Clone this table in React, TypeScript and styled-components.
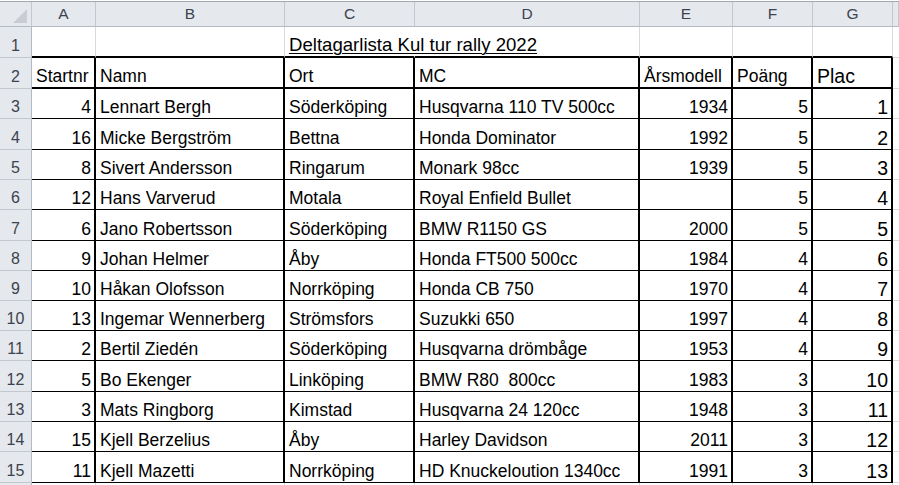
import React from 'react';
import styled, { createGlobalStyle, css } from 'styled-components';

const GlobalStyle = createGlobalStyle`
  html, body {
    margin: 0;
    padding: 0;
    background: #ffffff;
    overflow: hidden;
  }
`;

const COLS = '32px 64px 189px 130px 225px 93px 80px 80px 1fr';
const HEAD_BG = '#e5e8ec';
const HEAD_LINE = '#c3c8cf';
const GRID = '#d6d9de';

const Sheet = styled.div`
  width: 899px;
  height: 485px;
  overflow: hidden;
  padding-top: 1px;
  box-sizing: border-box;
  font-family: 'Liberation Sans', Arial, sans-serif;
  font-size: 17.5px;
  color: #000;
`;

const Row = styled.div<{ $h: number }>`
  display: grid;
  grid-template-columns: ${COLS};
  height: ${(p) => p.$h}px;
`;

const ColHeadRow = styled(Row)`
  border-top: 1px solid #a3a9b1;
`;

const Corner = styled.div`
  position: relative;
  background: ${HEAD_BG};
  border-right: 1px solid ${HEAD_LINE};
  border-bottom: 1px solid #b4bac3;

  &::after {
    content: '';
    position: absolute;
    right: 4px;
    bottom: 3px;
    width: 14px;
    height: 14px;
    background: #c9cdd3;
    clip-path: polygon(100% 0, 100% 100%, 0 100%);
  }
`;

const ColHead = styled.div`
  background: ${HEAD_BG};
  border-right: 1px solid ${HEAD_LINE};
  border-bottom: 1px solid #b4bac3;
  display: flex;
  align-items: center;
  justify-content: center;
  font-size: 15.5px;
  color: #3b4350;
`;

const RowHead = styled.div`
  background: ${HEAD_BG};
  border-right: 1px solid #b4bac3;
  border-bottom: 1px solid ${HEAD_LINE};
  display: flex;
  align-items: flex-end;
  justify-content: center;
  box-sizing: border-box;
  padding-bottom: 1px;
  line-height: 20px;
  font-size: 16px;
  color: #3b4350;
`;

type CellProps = {
  $table?: boolean;
  $topEdge?: boolean;
  $thick?: boolean;
  $right?: boolean;
  $big?: boolean;
  $title?: boolean;
  $noRight?: boolean;
};

const Cell = styled.div<CellProps>`
  box-sizing: border-box;
  display: flex;
  align-items: flex-end;
  justify-content: ${(p) => (p.$right ? 'flex-end' : 'flex-start')};
  padding: 0 3px 1px 4px;
  line-height: 20px;
  white-space: pre;
  overflow: hidden;
  border-right: 1px solid ${GRID};
  border-bottom: 1px solid ${GRID};

  ${(p) =>
    p.$table &&
    css`
      border-right: 2px solid #000;
      border-bottom: 1px solid #000;
    `}

  ${(p) =>
    (p.$thick || p.$topEdge) &&
    css`
      border-bottom: 2px solid #000;
    `}

  ${(p) =>
    p.$big &&
    css`
      font-size: 19.5px;
    `}

  ${(p) =>
    p.$noRight &&
    css`
      border-right-color: transparent;
    `}

  ${(p) =>
    p.$title &&
    css`
      overflow: visible;
      position: relative;
      z-index: 1;
      font-size: 18.6px;
      text-decoration: underline;
      text-underline-offset: 2px;
      text-decoration-thickness: 1px;
    `}
`;

type Entry = [number, string, string, string, string, number, number];

const entries: Entry[] = [
  [4, 'Lennart Bergh', 'Söderköping', 'Husqvarna 110 TV 500cc', '1934', 5, 1],
  [16, 'Micke Bergström', 'Bettna', 'Honda Dominator', '1992', 5, 2],
  [8, 'Sivert Andersson', 'Ringarum', 'Monark 98cc', '1939', 5, 3],
  [12, 'Hans Varverud', 'Motala', 'Royal Enfield Bullet', '', 5, 4],
  [6, 'Jano Robertsson', 'Söderköping', 'BMW R1150 GS', '2000', 5, 5],
  [9, 'Johan Helmer', 'Åby', 'Honda FT500 500cc', '1984', 4, 6],
  [10, 'Håkan Olofsson', 'Norrköping', 'Honda CB 750', '1970', 4, 7],
  [13, 'Ingemar Wennerberg', 'Strömsfors', 'Suzukki 650', '1997', 4, 8],
  [2, 'Bertil Ziedén', 'Söderköping', 'Husqvarna drömbåge', '1953', 4, 9],
  [5, 'Bo Ekenger', 'Linköping', 'BMW R80  800cc', '1983', 3, 10],
  [3, 'Mats Ringborg', 'Kimstad', 'Husqvarna 24 120cc', '1948', 3, 11],
  [15, 'Kjell Berzelius', 'Åby', 'Harley Davidson', '2011', 3, 12],
  [11, 'Kjell Mazetti', 'Norrköping', 'HD Knuckeloution 1340cc', '1991', 3, 13],
];

const letters = ['A', 'B', 'C', 'D', 'E', 'F', 'G', ''];

export default function App() {
  return (
    <>
      <GlobalStyle />
      <Sheet>
        <ColHeadRow $h={25}>
          <Corner />
          {letters.map((l, i) => (
            <ColHead key={i}>{l}</ColHead>
          ))}
        </ColHeadRow>

        {/* row 1: title, overflowing from C into D */}
        <Row $h={31}>
          <RowHead>1</RowHead>
          <Cell $topEdge />
          <Cell $topEdge />
          <Cell $topEdge $title $noRight>
            Deltagarlista Kul tur rally 2022
          </Cell>
          <Cell $topEdge />
          <Cell $topEdge />
          <Cell $topEdge />
          <Cell $topEdge />
          <Cell />
        </Row>

        {/* row 2: column titles */}
        <Row $h={31}>
          <RowHead>2</RowHead>
          <Cell $table $thick>Startnr</Cell>
          <Cell $table $thick>Namn</Cell>
          <Cell $table $thick>Ort</Cell>
          <Cell $table $thick>MC</Cell>
          <Cell $table $thick>Årsmodell</Cell>
          <Cell $table $thick>Poäng</Cell>
          <Cell $table $thick $big>Plac</Cell>
          <Cell />
        </Row>

        {entries.map((e, i) => (
          <Row key={i} $h={i % 3 === 2 ? 30 : 30.4}>
            <RowHead>{i + 3}</RowHead>
            <Cell $table $right>{e[0]}</Cell>
            <Cell $table>{e[1]}</Cell>
            <Cell $table>{e[2]}</Cell>
            <Cell $table>{e[3]}</Cell>
            <Cell $table $right>{e[4]}</Cell>
            <Cell $table $right>{e[5]}</Cell>
            <Cell $table $right $big>{e[6]}</Cell>
            <Cell />
          </Row>
        ))}

        {/* row 16, only its top edge is in view */}
        <Row $h={30}>
          <RowHead />
          <Cell />
          <Cell />
          <Cell />
          <Cell />
          <Cell />
          <Cell />
          <Cell />
          <Cell />
        </Row>
      </Sheet>
    </>
  );
}
